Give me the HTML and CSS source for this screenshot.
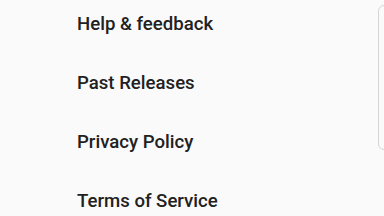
FILE: index.html
```html
<!DOCTYPE html>
<html>
<head>
<meta charset="utf-8">
<link rel="stylesheet" href="styles.css">
</head>
<body>
<div class="page">
  <ul class="menu">
    <li class="item">Help &amp; feedback</li>
    <li class="item">Past Releases</li>
    <li class="item">Privacy Policy</li>
    <li class="item">Terms of Service</li>
  </ul>
  <div class="edge"></div>
</div>
</body>
</html>
```
FILE: styles.css
```css
html, body {
  margin: 0;
  padding: 0;
  background: #fafafa;
}
.page {
  position: relative;
  width: 384px;
  height: 216px;
  overflow: hidden;
  font-family: Roboto, "Noto Sans", sans-serif;
}
.menu {
  list-style: none;
  margin: -5px 0 0 0;
  padding: 0 0 0 77px;
  display: flex;
  flex-direction: column;
}
.item {
  height: 59px;
  line-height: 59px;
  font-size: 18.6px;
  font-weight: 500;
  color: #212121;
  white-space: nowrap;
}
.edge {
  position: absolute;
  left: 378px;
  top: 5px;
  width: 20px;
  height: 145px;
  border: 1px solid #d6d6d6;
  border-radius: 6px;
  box-sizing: border-box;
}
```
